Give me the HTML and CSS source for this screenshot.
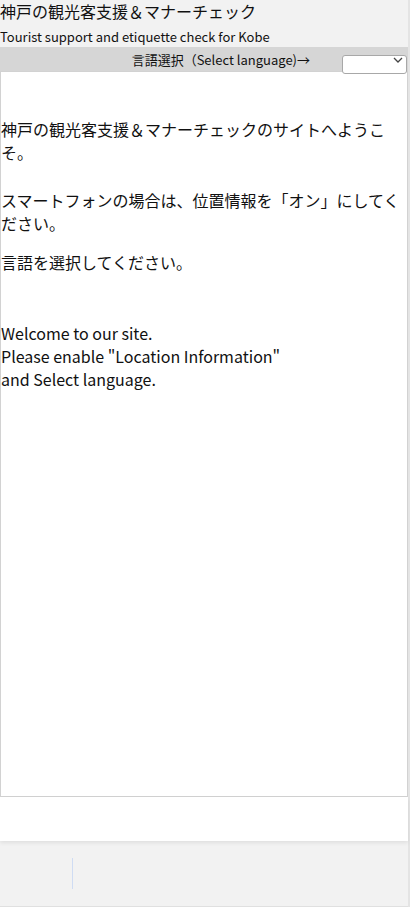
FILE: index.html
```html
<!DOCTYPE html>
<html lang="ja">
<head>
<meta charset="UTF-8">
<title>神戸の観光客支援＆マナーチェック</title>
<link rel="stylesheet" href="styles.css">
</head>
<body>
<div class="page">
  <header class="site-head">
    <div class="title">神戸の観光客支援＆マナーチェック</div>
    <div class="subtitle">Tourist support and etiquette check for Kobe</div>
  </header>
  <div class="lang-bar">
    <span class="lang-label">言語選択（Select language)→</span>
    <div class="lang-select">
      <select aria-label="language"><option></option></select>
      <svg class="chev" width="10" height="6" viewBox="0 0 10 6"><path d="M1 1l4 4 4-4" fill="none" stroke="#444" stroke-width="1.3"/></svg>
    </div>
  </div>
  <main class="content">
    <p class="msg first">神戸の観光客支援＆マナーチェックのサイトへようこそ。</p>
    <p class="msg second">スマートフォンの場合は、位置情報を「オン」にしてください。</p>
    <p class="msg third">言語を選択してください。</p>
    <p class="msg en">Welcome to our site.<br>Please enable "Location Information"<br>and Select language.</p>
  </main>
  <div class="after"></div>
  <div class="bottom-bar"><span class="caret"></span></div>
</div>
</body>
</html>
```

FILE: styles.css
```css
body { margin: 0; font-family: "Noto Sans CJK JP", "Noto Sans", sans-serif; color: #111; background: #fff; }
.page { width: 408px; border-right: 2px solid #e4e4e4; }

.site-head { background: #f2f2f2; height: 47px; }
.title { font-size: 16px; line-height: 23px; }
.subtitle { font-size: 13px; line-height: 19px; margin-top: 4px; }

.lang-bar { background: #d6d6d6; height: 24px; display: flex; align-items: center; justify-content: flex-end; }
.lang-label { font-size: 13px; margin-right: 32px; }
.lang-select { position: relative; width: 65px; height: 19px; margin-right: 1px; }
.lang-select select { appearance: none; width: 100%; height: 100%; border: 1px solid #a8a8a8; border-radius: 3px; background: #fff; margin: 0; }
.chev { position: absolute; right: 4px; top: 7px; }

.content { border: 1px solid #d2d2d2; height: 726px; padding-top: 46px; box-sizing: border-box; }
.msg { margin: 0; font-size: 16px; line-height: 23px; }
.second { margin-top: 25px; }
.third { margin-top: 16px; }
.en { margin-top: 48px; }

.after { height: 44px; box-shadow: 0 2px 4px rgba(0,0,0,0.08); position: relative; }
.bottom-bar { background: #f2f2f2; height: 66px; border-bottom: 1px solid #e0e0e0; padding-top: 17px; box-sizing: border-box; padding-left: 72px; }
.caret { display: block; width: 0; height: 31px; border-left: 1px solid #cfdcf3; }
```
